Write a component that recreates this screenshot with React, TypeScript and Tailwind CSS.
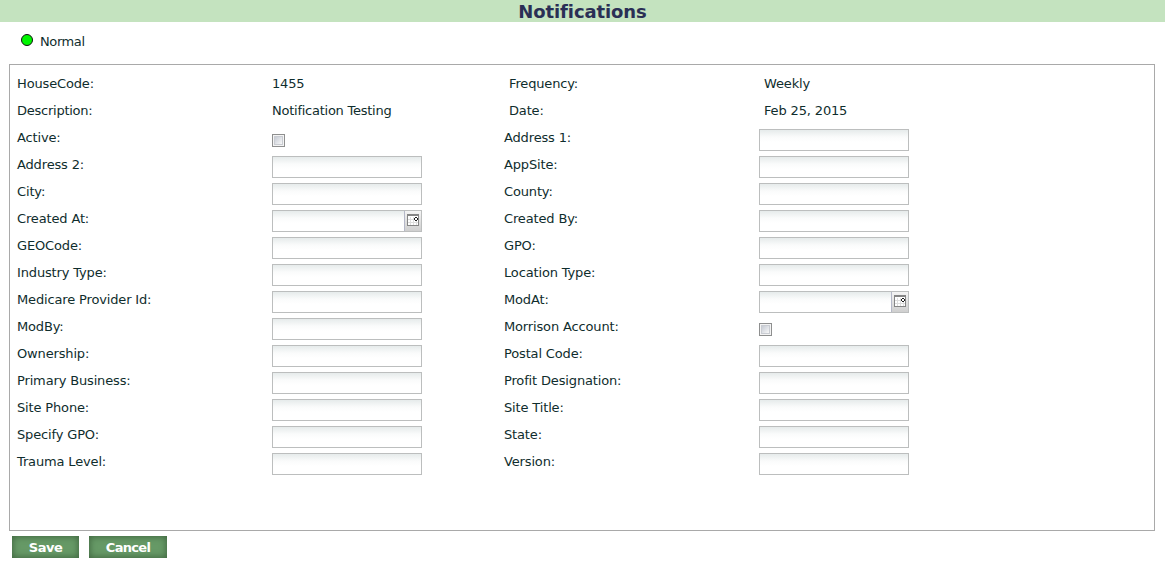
import { useState } from "react";

type Kind = "text" | "check" | "date";
type Field = { label: string; kind: Kind };

const info = [
  ["HouseCode:", "1455", "Frequency:", "Weekly"],
  ["Description:", "Notification Testing", "Date:", "Feb 25, 2015"],
];

const f = (label: string, kind: Kind = "text"): Field => ({ label, kind });

const fields: [Field, Field][] = [
  [f("Active:", "check"), f("Address 1:")],
  [f("Address 2:"), f("AppSite:")],
  [f("City:"), f("County:")],
  [f("Created At:", "date"), f("Created By:")],
  [f("GEOCode:"), f("GPO:")],
  [f("Industry Type:"), f("Location Type:")],
  [f("Medicare Provider Id:"), f("ModAt:", "date")],
  [f("ModBy:"), f("Morrison Account:", "check")],
  [f("Ownership:"), f("Postal Code:")],
  [f("Primary Business:"), f("Profit Designation:")],
  [f("Site Phone:"), f("Site Title:")],
  [f("Specify GPO:"), f("State:")],
  [f("Trauma Level:"), f("Version:")],
];

function CalendarIcon() {
  return (
    <svg width="12" height="12" viewBox="0 0 12 12" shapeRendering="crispEdges">
      <rect width="12" height="12" fill="#858585" />
      <rect x="1" y="2" width="10" height="9" fill="#fff" />
      <path d="M3.5 3v8M6.5 3v8M9.5 7v4M1 5.5h10M1 8.5h10" stroke="#dedede" fill="none" />
      <rect x="7" y="3" width="4" height="4" fill="#fff" />
      <path d="M8 3h2v1H8zM8 6h2v1H8zM7 4h1v2H7zM10 4h1v2h-1z" fill="#1c1c1c" />
    </svg>
  );
}

function Control({ label, kind }: Field) {
  const [value, setValue] = useState("");
  if (kind === "check")
    return (
      <input
        type="checkbox"
        aria-label={label}
        className="mt-[10px] block size-[13px] appearance-none border border-[#8e8f8f] bg-linear-to-br from-[#b9bfca] to-[#fafafa] to-85% shadow-[inset_0_0_0_1px_#f4f4f4,inset_0_0_0_2px_#c9ccd2] checked:from-[#4a5a78]"
      />
    );
  return (
    <div className="mt-[5px] flex h-[22px] w-[150px] border border-[#bcbebe] bg-linear-to-b from-[#e6ebeb] via-[#fafbfb] via-35% to-white to-60%">
      <input
        aria-label={label}
        value={value}
        onChange={(e) => setValue(e.target.value)}
        className="h-full min-w-0 flex-1 px-1 outline-none"
      />
      {kind === "date" && (
        <button
          aria-label="Choose date"
          className="flex w-[17px] justify-start border-l border-[#b5b8c8] bg-linear-to-b from-[#f4f4f4] to-[#cfcfcf] pt-[3px] pl-[2px]"
        >
          <CalendarIcon />
        </button>
      )}
    </div>
  );
}

const buttonClass =
  "h-[22px] bg-[#669966] pt-px text-[13px] leading-[21px] font-bold text-white shadow-[inset_0_0_6px_1px_#416841]";

export default function App() {
  return (
    <div className="h-[567px] overflow-hidden bg-white font-['DejaVu_Sans',sans-serif] text-[13px] tracking-[-0.15px] text-[#0f2d2d]">
      <h1 className="h-[22px] bg-[#c4e3bf] text-center text-[18px] leading-[23px] font-bold tracking-[-0.1px] text-[#2a2f55]">
        Notifications
      </h1>
      <div className="flex h-[42px] items-start pl-[21px]">
        <span className="mt-[12px] size-[12px] rounded-full border border-[#111] bg-[#00f700]" />
        <span className="ml-[7px] pt-[10px] leading-[20px] tracking-[-0.4px]">Normal</span>
      </div>
      <main className="ml-[9px] h-[467px] w-[1146px] border border-[#a9a9a9] pt-[5px] pl-[7px]">
        {info.map((row) => (
          <div key={row[0]} className="grid h-[27px] grid-cols-[255px_237px_255px_200px] leading-[27px]">
            {row.map((t) => (
              <span key={t} className={/^(Desc|Notif)/.test(t) ? "tracking-[-0.25px]" : ""}>
                {t}
              </span>
            ))}
          </div>
        ))}
        {fields.map((pair) => (
          <div key={pair[0].label} className="grid h-[27px] grid-cols-[255px_232px_255px_200px] leading-[27px]">
            {pair.map((field) => (
              <div key={field.label} className="contents">
                <span>{field.label}</span>
                <Control {...field} />
              </div>
            ))}
          </div>
        ))}
      </main>
      <div className="flex gap-[10px] pt-[5px] pl-[12px]">
        <button className={`${buttonClass} w-[67px] tracking-[-0.5px]`}>Save</button>
        <button className={`${buttonClass} w-[78px] tracking-[-0.7px]`}>Cancel</button>
      </div>
    </div>
  );
}
